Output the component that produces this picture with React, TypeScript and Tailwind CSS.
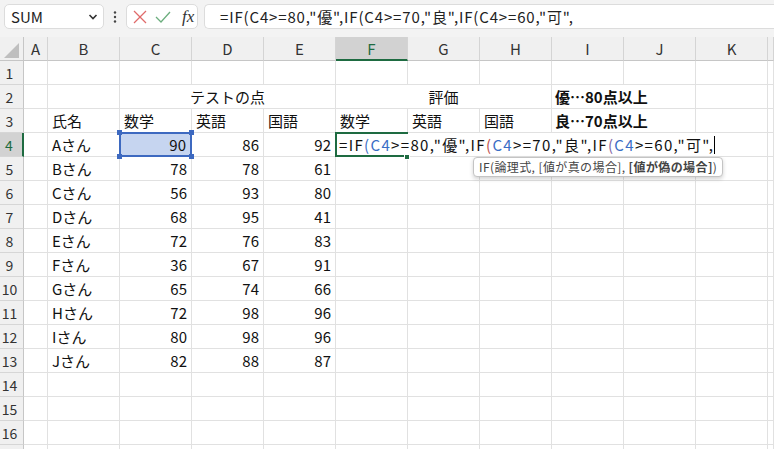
import React from "react";

const COLS = ["A", "B", "C", "D", "E", "F", "G", "H", "I", "J", "K", ""];

const DATA: [string, number, number, number][] = [
  ["Aさん", 90, 86, 92],
  ["Bさん", 78, 78, 61],
  ["Cさん", 56, 93, 80],
  ["Dさん", 68, 95, 41],
  ["Eさん", 72, 76, 83],
  ["Fさん", 36, 67, 91],
  ["Gさん", 65, 74, 66],
  ["Hさん", 72, 98, 96],
  ["Iさん", 80, 98, 96],
  ["Jさん", 82, 88, 87],
];

const FONT = { fontFamily: '"Noto Sans CJK JP", "Noto Sans", sans-serif' };

function Cell({
  children,
  className = "",
  span,
}: {
  children?: React.ReactNode;
  className?: string;
  span?: number;
}) {
  const spanCls =
    span === 3 ? "col-span-3" : span === 2 ? "col-span-2" : "";
  return (
    <div
      className={`h-[24px] border-r border-b border-[#e1e1e1] bg-white flex items-center text-[15px] leading-none text-[#111] whitespace-nowrap ${spanCls} ${className}`}
    >
      {children}
    </div>
  );
}

function RowHead({ n, active }: { n: number | null; active?: boolean }) {
  return (
    <div
      className={`h-[24px] flex items-center justify-center pr-[4px] text-[14px] leading-none border-b border-[#d6d6d6] ${
        active
          ? "bg-[#d2d2d2] text-[#1e6b41] border-r-2 border-r-[#1e6b41]"
          : "bg-[#f0f0f0] text-[#333] border-r border-r-[#c6c6c6]"
      }`}
    >
      {n}
    </div>
  );
}

function ColoredFormula() {
  return (
    <>
      =IF<span className="text-[#3a6dc5]">(</span>
      <span className="text-[#3a6dc5]">C4</span>&gt;=80,"優",IF
      <span className="text-[#c0504d]">(</span>
      <span className="text-[#3a6dc5]">C4</span>&gt;=70,"良",IF
      <span className="text-[#8064a2]">(</span>
      <span className="text-[#3a6dc5]">C4</span>&gt;=60,"可",
    </>
  );
}

export default function App() {
  const rows: React.ReactNode[] = [];
  for (let r = 1; r <= 17; r++) {
    const cells: React.ReactNode[] = [];
    cells.push(<RowHead key={`h${r}`} n={r === 17 ? null : r} active={r === 4} />);
    cells.push(<Cell key={`a${r}`} />);
    if (r === 2) {
      cells.push(<Cell key="b2" />);
      cells.push(
        <Cell key="c2" span={3} className="justify-center">
          テストの点
        </Cell>
      );
      cells.push(
        <Cell key="f2" span={3} className="justify-center">
          評価
        </Cell>
      );
      cells.push(
        <Cell key="i2" span={2} className="pl-[3px] font-bold">
          優…80点以上
        </Cell>
      );
      cells.push(<Cell key="k2" />);
      cells.push(<Cell key="l2" />);
    } else if (r === 3) {
      ["氏名", "数学", "英語", "国語", "数学", "英語", "国語"].forEach((t, i) =>
        cells.push(
          <Cell key={`t3${i}`} className="pl-[4px]">
            {t}
          </Cell>
        )
      );
      cells.push(
        <Cell key="i3" span={2} className="pl-[3px] font-bold">
          良…70点以上
        </Cell>
      );
      cells.push(<Cell key="k3" />);
      cells.push(<Cell key="l3" />);
    } else if (r >= 4 && r <= 13) {
      const d = DATA[r - 4];
      cells.push(
        <Cell key={`b${r}`} className="pl-[4px]">
          {d[0]}
        </Cell>
      );
      if (r === 4) {
        cells.push(
          <div
            key="c4"
            className="relative h-[24px] border-r border-b border-[#e1e1e1] bg-[#c6d5f0]"
          >
            <div className="absolute left-[-1px] top-[-1px] w-[73px] h-[25px] border-2 border-[#3d69c0] flex items-center justify-end pr-[4px] text-[15px] leading-none text-[#111]">
              90
            </div>
            <div className="absolute left-[-3px] top-[-3px] w-[5px] h-[5px] bg-[#3d69c0]" />
            <div className="absolute right-[-3px] top-[-3px] w-[5px] h-[5px] bg-[#3d69c0]" />
            <div className="absolute left-[-3px] bottom-[-3px] w-[5px] h-[5px] bg-[#3d69c0]" />
            <div className="absolute right-[-3px] bottom-[-3px] w-[5px] h-[5px] bg-[#3d69c0]" />
          </div>
        );
      } else {
        cells.push(
          <Cell key={`c${r}`} className="justify-end pr-[4px]">
            {d[1]}
          </Cell>
        );
      }
      cells.push(
        <Cell key={`d${r}`} className="justify-end pr-[4px]">
          {d[2]}
        </Cell>
      );
      cells.push(
        <Cell key={`e${r}`} className="justify-end pr-[4px]">
          {d[3]}
        </Cell>
      );
      if (r === 4) {
        cells.push(
          <div key="f4" className="relative h-[24px] border-r border-b border-[#e1e1e1] bg-white">
            <div className="absolute left-0 top-0 w-[386px] h-[23px] bg-white z-10 flex items-center pl-[3px] text-[15px] leading-none tracking-[1.35px] text-[#111] whitespace-nowrap">
              <ColoredFormula />
              <span className="inline-block w-[1px] h-[18px] bg-black" />
            </div>
            <div className="absolute left-[-1px] top-[-1px] w-[2px] h-[25px] bg-[#1e6b41] z-20" />
            <div className="absolute left-[-1px] top-[-1px] w-[73px] h-[2px] bg-[#1e6b41] z-20" />
            <div className="absolute left-[-1px] bottom-[-1px] w-[69px] h-[2px] bg-[#1e6b41] z-20" />
            <div className="absolute right-[-3px] bottom-[-4px] w-[6px] h-[6px] bg-[#1e6b41] border border-white z-20" />
            <div className="absolute left-[137px] top-[24px] h-[20px] px-[5px] rounded-[4px] border border-[#c4c4c4] bg-white shadow-[0_2px_4px_rgba(0,0,0,0.18)] z-30 flex items-center text-[12px] leading-none tracking-[0.4px] text-[#444] whitespace-nowrap">
              IF(論理式, [値が真の場合],&nbsp;<span className="font-bold">[値が偽の場合]</span>)
            </div>
          </div>
        );
      } else {
        cells.push(<Cell key={`f${r}`} />);
      }
      for (let c = 0; c < 6; c++) cells.push(<Cell key={`x${r}${c}`} />);
    } else {
      for (let c = 0; c < 11; c++) cells.push(<Cell key={`e${r}${c}`} />);
    }
    rows.push(<React.Fragment key={`r${r}`}>{cells}</React.Fragment>);
  }

  return (
    <div className="w-[774px] h-[449px] overflow-hidden bg-white flex flex-col" style={FONT}>
      {/* Toolbar */}
      <div className="h-[37px] shrink-0 bg-[#f3f3f3] flex items-start pt-[4px] pl-[4px] gap-0">
        <div className="w-[100px] h-[25px] bg-white rounded-[5px] border border-[#dcdcdc] flex items-center justify-between pl-[6px] pr-[5px] text-[15px] leading-none text-[#222]">
          <span>SUM</span>
          <svg width="10" height="8" viewBox="0 0 10 8">
            <polyline points="1.5,2 5,5.5 8.5,2" fill="none" stroke="#333" strokeWidth="1.6" />
          </svg>
        </div>
        <div className="w-[22px] h-[25px] flex items-center justify-center">
          <svg width="4" height="12" viewBox="0 0 4 12">
            <circle cx="2" cy="1.5" r="1.2" fill="#444" />
            <circle cx="2" cy="6" r="1.2" fill="#444" />
            <circle cx="2" cy="10.5" r="1.2" fill="#444" />
          </svg>
        </div>
        <div className="w-[72px] h-[25px] bg-white rounded-[5px] border border-[#dcdcdc] flex items-center pl-[6px]">
          <svg width="14" height="14" viewBox="0 0 14 14">
            <line x1="1" y1="1" x2="13" y2="13" stroke="#e06b6b" strokeWidth="1.3" />
            <line x1="13" y1="1" x2="1" y2="13" stroke="#e06b6b" strokeWidth="1.3" />
          </svg>
          <svg width="16" height="14" viewBox="0 0 16 14" className="ml-[8px]">
            <polyline points="1,7 6,12 15,2" fill="none" stroke="#6cae7e" strokeWidth="1.3" />
          </svg>
          <span
            className="ml-[11px] text-[17px] leading-none italic text-[#333]"
            style={{ fontFamily: '"Liberation Serif", serif' }}
          >
            fx
          </span>
        </div>
        <div className="ml-[6px] flex-1 h-[25px] bg-white rounded-l-[5px] border border-r-0 border-[#dcdcdc] flex items-center pl-[15px] text-[15px] leading-none tracking-[0.85px] text-[#222] whitespace-nowrap">
          =IF(C4&gt;=80,"優",IF(C4&gt;=70,"良",IF(C4&gt;=60,"可",
        </div>
      </div>
      {/* Grid */}
      <div className="grid grid-cols-[24px_24px_repeat(10,72px)_1fr]">
        <div className="h-[24px] bg-[#f0f0f0] border-r border-b border-[#c6c6c6] relative">
          <svg width="24" height="24" viewBox="0 0 24 24" className="absolute left-0 top-0">
            <polygon points="4,21 19,21 19,6" fill="#bfbfbf" />
          </svg>
        </div>
        {COLS.map((c) => (
          <div
            key={c || "L"}
            className={`h-[24px] flex items-center justify-center text-[15px] leading-none border-r border-[#d4d4d4] ${
              c === "F"
                ? "bg-[#d2d2d2] text-[#1e6b41] border-b-2 border-b-[#1e6b41]"
                : "bg-[#f0f0f0] text-[#333] border-b border-b-[#c6c6c6]"
            }`}
          >
            {c}
          </div>
        ))}
        {rows}
      </div>
    </div>
  );
}
